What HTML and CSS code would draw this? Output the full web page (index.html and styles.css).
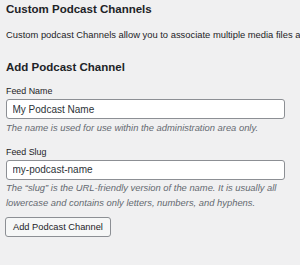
FILE: index.html
```html
<!DOCTYPE html>
<html lang="en">
<head>
  <meta charset="UTF-8" />
  <title>Custom Podcast Channels</title>
  <meta name="viewport" content="width=device-width, initial-scale=1.0" />
  <link rel="stylesheet" href="styles.css">
</head>
<body>
  <div class="wrap">
    <h2 class="page-title">Custom Podcast Channels</h2>
    <p class="intro">Custom podcast Channels allow you to associate multiple media files and/or formats to one blog post.</p>

    <h3 class="section-title">Add Podcast Channel</h3>
    <form id="addChannel" method="POST" action="#">
      <div class="form-field">
        <label for="feed_name">Feed Name</label>
        <input type="text" name="feed_name" id="feed_name" value="My Podcast Name" />
        <p class="help">The name is used for use within the administration area only.</p>
      </div>

      <div class="form-field">
        <label for="feed_slug">Feed Slug</label>
        <input type="text" name="feed_slug" id="feed_slug" value="my-podcast-name" />
        <p class="help">The “slug” is the URL-friendly version of the name. It is usually all lowercase and contains only letters, numbers, and hyphens.</p>
      </div>

      <button type="submit" class="button">Add Podcast Channel</button>
    </form>
  </div>
</body>
</html>
```

FILE: styles.css
```css
body {
  font-family: 'Liberation Sans', Arial, sans-serif;
  background-color: #f0f0f1;
  color: #1d2327;
  margin: 0;
  padding: 0;
  overflow: hidden;
}

.wrap {
  width: 279px;
  padding: 2px 0 0 6px;
}

.page-title {
  font-size: 11.5px;
  font-weight: 700;
  margin: 0;
  line-height: 14px;
  white-space: nowrap;
}

.intro {
  font-size: 9.4px;
  margin: 12px 0 0;
  line-height: 13px;
  white-space: nowrap;
  overflow: hidden;
  width: 294px;
}

.section-title {
  font-size: 11.5px;
  font-weight: 700;
  margin: 19px 0 0;
  line-height: 14px;
}

.form-field {
  margin-top: 12px;
}

.form-field + .form-field {
  margin-top: 11.5px;
}

label {
  display: block;
  font-size: 8.9px;
  line-height: 11px;
  margin-bottom: 2px;
}

input[type="text"] {
  display: block;
  width: 100%;
  height: 20px;
  padding: 0 5.5px;
  border: 1px solid #8c8f94;
  border-radius: 3px;
  background: #fff;
  color: #2c3338;
  font-family: inherit;
  font-size: 10px;
  box-sizing: border-box;
}

.help {
  font-size: 9.4px;
  font-style: italic;
  color: #646970;
  line-height: 15px;
  margin: 1px 0 0;
}

.form-field + .form-field .help {
  margin-top: 0;
}

.button {
  display: block;
  margin-top: 7.5px;
  margin-left: -1px;
  height: 20px;
  padding: 0 7px;
  background: #f6f7f7;
  color: #1d2327;
  border: 1px solid #8c8f94;
  border-radius: 3px;
  font-family: inherit;
  font-size: 9.3px;
  cursor: pointer;
}
```
